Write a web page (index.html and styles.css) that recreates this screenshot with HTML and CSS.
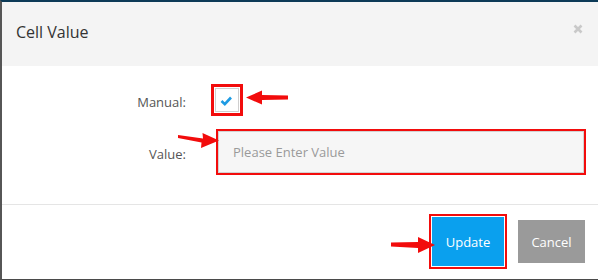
FILE: index.html
```html
<!DOCTYPE html>
<html lang="en">
<head>
    <meta charset="UTF-8">
    <meta name="viewport" content="width=device-width, initial-scale=1.0">
    <title>Cell Value</title>
    <link rel="stylesheet" href="styles.css">
</head>
<body>
    <div class="modal">
        <div class="modal-header">
            <h4 class="modal-title">Cell Value</h4>
            <button class="close" aria-label="Close">
                <svg width="10" height="10" viewBox="0 0 10 10">
                    <path d="M1.5 1.5 L8.5 8.5 M8.5 1.5 L1.5 8.5" stroke="#c9c9c9" stroke-width="2.6" fill="none"/>
                </svg>
            </button>
        </div>

        <div class="modal-body">
            <div class="form-row">
                <label>Manual:</label>
                <span class="check marked">
                    <svg width="24" height="24" viewBox="0 0 24 24">
                        <path d="M6.5 13 L9.8 16.2 L16 9.5" stroke="#1e9be3" stroke-width="2.6" fill="none"/>
                    </svg>
                </span>
            </div>
            <div class="form-row">
                <label>Value:</label>
                <input type="text" class="field marked" placeholder="Please Enter Value">
            </div>
        </div>

        <div class="modal-footer">
            <button class="btn btn-update marked">Update</button>
            <button class="btn btn-cancel">Cancel</button>
        </div>

        <!-- annotation arrows drawn over the dialog -->
        <svg class="annotations" width="598" height="280" viewBox="0 0 598 280">
            <g fill="#f20c0c">
                <path d="M288 95.5 L262 95 L262 90.5 L246 97.5 L262 104.5 L262 100 L288 99.5 Z"/>
                <path d="M178 135 L203 138.5 L202.5 133 L219 140.5 L201 148 L201.5 142.5 L178 138 Z"/>
                <path d="M391 242.5 L418 242 L418 237 L435 245 L418 253 L418 248 L391 246.5 Z"/>
            </g>
        </svg>
    </div>
</body>
</html>
```

FILE: styles.css
```css
* {
    margin: 0;
    padding: 0;
    box-sizing: border-box;
}

body {
    font-family: 'Open Sans', 'DejaVu Sans', sans-serif;
    background: white;
}

.modal {
    position: relative;
    width: 598px;
    height: 280px;
    background: white;
    border-top: 2px solid #0c3a57;
    border-left: 2px solid #565656;
    border-bottom: 1px solid #4a4a4a;
    overflow: hidden;
}

.modal-header {
    height: 64px;
    background: #f4f4f4;
    display: flex;
    align-items: center;
    justify-content: space-between;
    padding: 0 15px 4px 14px;
}

.modal-title {
    font-size: 16px;
    font-weight: 400;
    color: #333;
}

.close {
    border: none;
    background: none;
    display: flex;
    margin-bottom: 6px;
}

.modal-body {
    padding: 22px 0 31px;
    display: flex;
    flex-direction: column;
    gap: 19px;
}

.form-row {
    display: grid;
    grid-template-columns: 184px auto;
    column-gap: 29px;
    align-items: center;
}

.form-row label {
    text-align: right;
    font-size: 13px;
    color: #555;
    padding-top: 3px;
}

.check {
    display: flex;
    width: 24px;
    height: 24px;
    border: 1px solid #cfcfcf;
    background: white;
}

.check svg {
    margin: -1px;
}

.field {
    margin-left: 3px;
    width: 366px;
    height: 42px;
    background: #f6f6f6;
    border: 1px solid #d2d2d2;
    padding: 0 14px;
    font-family: inherit;
    font-size: 13px;
    color: #333;
}

.field::placeholder {
    color: #9a9a9a;
}

.marked {
    outline: 2px solid #f20c0c;
}

.check.marked {
    outline-width: 3px;
    outline-offset: 1px;
}

.modal-footer {
    height: 74px;
    border-top: 1px solid #e5e5e5;
    display: flex;
    align-items: center;
    justify-content: flex-end;
    gap: 14px;
    padding-right: 13px;
}

.btn {
    border: none;
    color: white;
    font-family: inherit;
    font-size: 13px;
}

.btn-update {
    width: 72px;
    height: 49px;
    background: #0aa0ee;
    outline-offset: 1px;
}

.btn-cancel {
    width: 67px;
    height: 43px;
    background: #9a9a9a;
}

.annotations {
    position: absolute;
    top: -2px;
    left: -2px;
    pointer-events: none;
}
```
